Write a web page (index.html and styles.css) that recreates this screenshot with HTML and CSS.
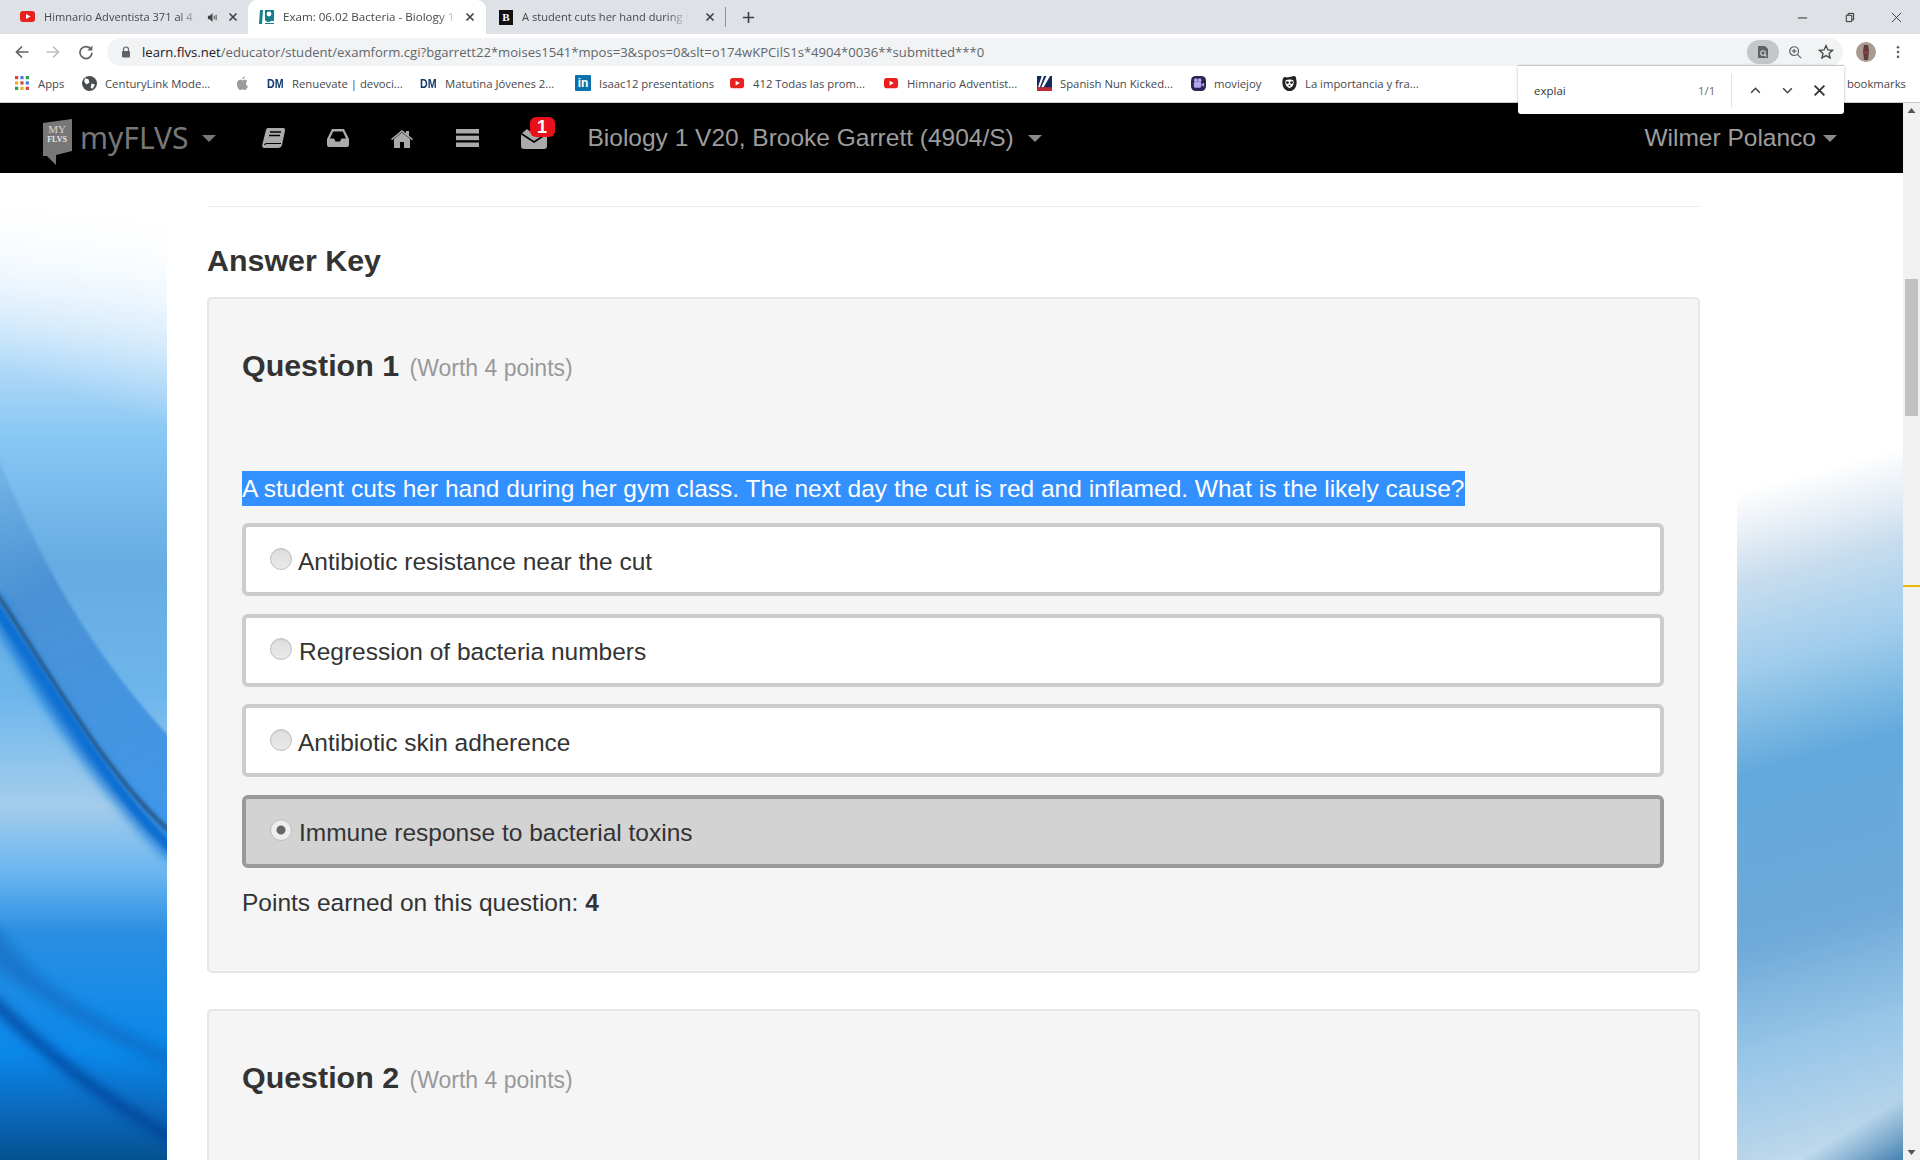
FILE: index.html
```html
<!DOCTYPE html>
<html lang="en">
<head>
<meta charset="utf-8">
<title>Exam: 06.02 Bacteria - Biology 1</title>
<link rel="stylesheet" href="styles.css">
</head>
<body>
<div class="window">
  <div class="tabstrip">
    <div class="tab tab-first">
      <svg class="fav" viewBox="0 0 16 16"><rect x="0" y="2" width="15" height="11" rx="3" fill="#e8201f"/><path d="M6 5l4.5 2.5L6 10z" fill="#fff"/></svg>
      <span class="tab-title tab-title-first">Himnario Adventista 371 al 4</span>
      <svg class="speaker" viewBox="0 0 12 12"><path d="M1 4h2l3-3v10L3 8H1z" fill="#444"/><path d="M8 4v4M10 3v6" stroke="#444" stroke-width="1"/></svg>
      <svg class="tab-x" viewBox="0 0 10 10"><path d="M1.5 1.5l7 7M8.5 1.5l-7 7" stroke="#3c4043" stroke-width="1.6"/></svg>
    </div>
    <div class="tab tab-active">
      <svg class="fav" viewBox="0 0 16 16"><path d="M1 1h3L3 15H0zM6 1h9v11h-3a4 4 0 0 1-6-1z" fill="#14808f"/><circle cx="10" cy="5" r="2.4" fill="#fff"/><path d="M6 14h9v1H6z" fill="#14808f"/></svg>
      <span class="tab-title tab-title-active">Exam: 06.02 Bacteria - Biology 1 V</span>
      <svg class="tab-x" viewBox="0 0 10 10"><path d="M1.5 1.5l7 7M8.5 1.5l-7 7" stroke="#3c4043" stroke-width="1.6"/></svg>
    </div>
    <div class="tab tab-third">
      <span class="fav fav-b">B</span>
      <span class="tab-title tab-title-third">A student cuts her hand during h</span>
      <svg class="tab-x" viewBox="0 0 10 10"><path d="M1.5 1.5l7 7M8.5 1.5l-7 7" stroke="#3c4043" stroke-width="1.6"/></svg>
    </div>
    <span class="tab-sep"></span>
    <svg class="new-tab" viewBox="0 0 14 14"><path d="M7 1v12M1 7h12" stroke="#3c4043" stroke-width="1.7"/></svg>
    <div class="win-controls">
      <svg class="win-btn" viewBox="0 0 12 12"><path d="M1 6.5h10" stroke="#222" stroke-width="1"/></svg>
      <svg class="win-btn" viewBox="0 0 12 12"><path d="M2.5 3.5h6v7h-6zM4.500 3.500v-2h6v7h-2" fill="none" stroke="#222" stroke-width="1"/></svg>
      <svg class="win-btn" viewBox="0 0 12 12"><path d="M1 1l10 10M11 1L1 11" stroke="#222" stroke-width="0.9"/></svg>
    </div>
  </div>

  <div class="toolbar">
    <svg class="tb-icon tb-back" viewBox="0 0 16 16"><path d="M14.5 8H2.500M8 2.500L2.500 8 8 13.500" fill="none" stroke="#5f6368" stroke-width="1.7"/></svg>
    <svg class="tb-icon tb-forward" viewBox="0 0 16 16"><path d="M1.500 8h12M8 2.500L13.500 8 8 13.500" fill="none" stroke="#bdc1c6" stroke-width="1.7"/></svg>
    <svg class="tb-icon tb-reload" viewBox="0 0 16 16"><path d="M13 5.200A6 6 0 1 0 14 8.800" fill="none" stroke="#5f6368" stroke-width="1.7"/><path d="M14.400 1.600v5h-5z" fill="#5f6368"/></svg>
    <div class="omnibox">
      <svg class="lock" viewBox="0 0 10 12"><path d="M2.500 5V3.500a2.500 2.500 0 0 1 5 0V5" fill="none" stroke="#5f6368" stroke-width="1.2"/><rect x="1" y="5" width="8" height="6.500" rx="1" fill="#5f6368"/></svg>
      <span class="url"><span class="url-host">learn.flvs.net</span>/educator/student/examform.cgi?bgarrett22*moises1541*mpos=3&amp;spos=0&amp;slt=o174wKPCilS1s*4904*0036**submitted***0</span>
      <span class="omni-find"><svg viewBox="0 0 12 14"><path d="M1 1h7l3 3v9H1z" fill="#5f6368"/><circle cx="6" cy="8" r="2.300" fill="none" stroke="#d3d5d8" stroke-width="1.1"/><path d="M7.600 9.600L9.500 11.500" stroke="#d3d5d8" stroke-width="1.1"/></svg></span>
      <svg class="omni-icon" viewBox="0 0 16 16"><circle cx="7" cy="7" r="5" fill="none" stroke="#5f6368" stroke-width="1.4"/><path d="M10.700 10.700L15 15M7 4.500v5M4.500 7h5" stroke="#5f6368" stroke-width="1.4"/></svg>
      <svg class="omni-icon omni-star" viewBox="0 0 16 16"><path d="M8 1.600l1.900 4.300 4.700.4-3.600 3.100 1.100 4.600L8 11.600 3.900 14l1.100-4.600-3.600-3.100 4.700-.4z" fill="none" stroke="#444" stroke-width="1.3"/></svg>
    </div>
    <svg class="avatar" viewBox="0 0 20 20"><circle cx="10" cy="10" r="10" fill="#a89a90"/><path d="M8 3h4l1 6-1 9H8l-1-9z" fill="#5c3f3c"/><path d="M8 9h4v3H8z" fill="#8f3b46"/></svg>
    <svg class="menu-dots" viewBox="0 0 4 16"><circle cx="2" cy="2.500" r="1.500" fill="#5f6368"/><circle cx="2" cy="8" r="1.500" fill="#5f6368"/><circle cx="2" cy="13.500" r="1.500" fill="#5f6368"/></svg>
  </div>

  <div class="bookmarks">
    <div class="bm"><svg class="bm-icon" viewBox="0 0 14 14"><g><rect x="0" y="0" width="3" height="3" fill="#d9443a"/><rect x="5" y="0" width="3" height="3" fill="#3f7fe0"/><rect x="10" y="0" width="3" height="3" fill="#2e9c50"/><rect x="0" y="5" width="3" height="3" fill="#e8b31e"/><rect x="5" y="5" width="3" height="3" fill="#d9443a"/><rect x="10" y="5" width="3" height="3" fill="#3f7fe0"/><rect x="0" y="10" width="3" height="3" fill="#2e9c50"/><rect x="5" y="10" width="3" height="3" fill="#e8b31e"/><rect x="10" y="10" width="3" height="3" fill="#d9443a"/></g></svg><span class="bm-text">Apps</span></div>
    <div class="bm"><svg class="bm-icon" viewBox="0 0 14 14"><circle cx="7" cy="7" r="7" fill="#4a4d50"/><path d="M3 2l3 1 1 3-3 2-2-3zM9 7l3 1-2 4-2-1z" fill="#fff"/></svg><span class="bm-text">CenturyLink Mode...</span></div>
    <div class="bm"><svg class="bm-icon" viewBox="0 0 14 16"><path d="M9.500 4c1 0 2 .5 2.700 1.400-2.200 1.400-1.800 4.500.6 5.500-.8 2-2 4-3.200 4-1 0-1.300-.6-2.500-.6s-1.600.6-2.500.6C3 15 1 11.500 1 8.500 1 5.500 3 4 4.700 4c1 0 1.900.7 2.500.7S8.500 4 9.500 4zM9.500.5c.1 1.500-1.200 3-2.700 2.900-.2-1.500 1.300-2.900 2.700-2.900z" fill="#9b9b9b"/></svg></div>
    <div class="bm"><span class="dm">DM</span><span class="bm-text">Renuevate | devoci...</span></div>
    <div class="bm"><span class="dm">DM</span><span class="bm-text">Matutina Jóvenes 2...</span></div>
    <div class="bm"><span class="li">in</span><span class="bm-text">Isaac12 presentations</span></div>
    <div class="bm"><svg class="bm-icon" viewBox="0 0 16 16"><rect x="0" y="2" width="15" height="11" rx="3" fill="#e8201f"/><path d="M6 5l4.500 2.500L6 10z" fill="#fff"/></svg><span class="bm-text">412 Todas las prom...</span></div>
    <div class="bm"><svg class="bm-icon" viewBox="0 0 16 16"><rect x="0" y="2" width="15" height="11" rx="3" fill="#e8201f"/><path d="M6 5l4.500 2.500L6 10z" fill="#fff"/></svg><span class="bm-text">Himnario Adventist...</span></div>
    <div class="bm"><svg class="bm-icon" viewBox="0 0 16 16"><rect width="16" height="16" fill="#132a5c"/><path d="M5 0h2.500L3 12H1zM10 0h4L7 12H4.500z" fill="#fff"/><path d="M0 12h16v4H0z" fill="#c02a35"/></svg><span class="bm-text">Spanish Nun Kicked...</span></div>
    <div class="bm"><svg class="bm-icon" viewBox="0 0 16 16"><rect width="16" height="16" rx="5" fill="#2b2452"/><rect x="3" y="6.500" width="8" height="6" rx="1.500" fill="#b5a4ee"/><circle cx="5.200" cy="4.500" r="2" fill="#b5a4ee"/><circle cx="9.200" cy="4.500" r="2" fill="#b5a4ee"/><path d="M11 9l3-1.800v4.600z" fill="#b5a4ee"/></svg><span class="bm-text">moviejoy</span></div>
    <div class="bm"><svg class="bm-icon" viewBox="0 0 16 16"><path d="M1 3a2.500 2.500 0 0 1 4-1.500L8 1l3-.5A2.500 2.500 0 0 1 15 3c1 3 1 8-2 11l-3 2H6l-3-2C0 11 0 6 1 3z" fill="#222"/><path d="M4 4.500c2-1.200 6-1.200 8 0 .8 2 .5 5-1 6.500l-3 2-3-2c-1.500-1.500-1.800-4.500-1-6.500z" fill="#fff"/><circle cx="5.800" cy="7" r="1.500" fill="#222"/><circle cx="10.200" cy="7" r="1.500" fill="#222"/><circle cx="8" cy="10" r="1" fill="#222"/></svg><span class="bm-text">La importancia y fra...</span></div>
    <span class="bm-text bm-other">bookmarks</span>
  </div>

  <div class="findbar">
    <span class="find-input">explai</span>
    <span class="find-count">1/1</span>
    <span class="find-sep"></span>
    <svg class="find-btn find-btn-first" viewBox="0 0 12 12"><path d="M2 8l4-4 4 4" fill="none" stroke="#444" stroke-width="1.400"/></svg>
    <svg class="find-btn" viewBox="0 0 12 12"><path d="M2 4l4 4 4-4" fill="none" stroke="#444" stroke-width="1.400"/></svg>
    <svg class="find-btn" viewBox="0 0 12 12"><path d="M1.500 1.500l9 9M10.500 1.500l-9 9" stroke="#333" stroke-width="1.700"/></svg>
  </div>

  <div class="viewport">
    <div class="page">
      <nav class="navbar">
        <div class="brand">
          <svg class="logo" viewBox="0 0 29 46"><path d="M0 4L29 0v32L13 36v10L4 37H0z" fill="#777"/><text x="14" y="14" class="logo-my">MY</text><text x="14" y="23" class="logo-flvs">FLVS</text></svg>
          <span class="brand-name">myFLVS</span>
          <span class="caret caret-brand"></span>
        </div>
        <svg class="nav-icon nav-book" viewBox="0 0 24 22"><path d="M6 1h15c1.500 0 2.500 1 2 2.500L20 18c-.5 2-2 3-4 3H3c-2 0-3.200-1.500-2.700-3.500L4 3c.3-1.200 1-2 2-2z" fill="#aaa"/><path d="M8 5h11M7 8.500h11" stroke="#000" stroke-width="1.500"/><path d="M2.500 18c.3-1 1-1.500 2-1.500H19" fill="none" stroke="#000" stroke-width="1.200"/></svg>
        <svg class="nav-icon nav-inbox" viewBox="0 0 22 18"><path d="M5 0h12l5 10v6a2 2 0 0 1-2 2H2a2 2 0 0 1-2-2v-6z" fill="#aaa"/><path d="M6.200 2.500h9.600l3.200 7h-4.500l-1.500 3H8.500l-1.500-3H3z" fill="#000"/></svg>
        <svg class="nav-icon nav-home" viewBox="0 0 22 19"><path d="M11 3.500l8 6.500v9h-6v-6H9v6H3v-9z" fill="#aaa"/><path d="M0 10L11 1l4 3.300V2h3v4.700L22 10l-1 1.200L11 3 1 11.200z" fill="#aaa"/></svg>
        <svg class="nav-icon nav-bars" viewBox="0 0 23 18"><rect width="23" height="4.500" fill="#aaa"/><rect y="6.700" width="23" height="4.500" fill="#aaa"/><rect y="13.500" width="23" height="4.500" fill="#aaa"/></svg>
        <div class="nav-mail">
          <svg class="nav-icon-mail" viewBox="0 0 26 21"><path d="M0 6l6-5 7 6 13-6v17a3 3 0 0 1-3 3H3a3 3 0 0 1-3-3z" fill="#aaa"/><path d="M0 5.500l13 8.500 13-8.500" fill="none" stroke="#000" stroke-width="1.500"/></svg>
          <span class="badge">1</span>
        </div>
        <span class="course">Biology 1 V20, Brooke Garrett (4904/S)</span>
        <span class="caret caret-course"></span>
        <span class="user">Wilmer Polanco</span>
        <span class="caret caret-user"></span>
      </nav>
      <div class="layout">
        <aside class="side">
          <svg class="side-art" viewBox="0 0 167 988" preserveAspectRatio="none">
            <defs>
              <linearGradient id="lg" x1="0" y1="0" x2="0" y2="1">
                <stop offset="0.03" stop-color="#fff"/>
                <stop offset="0.10" stop-color="#e6f3fd"/>
                <stop offset="0.17" stop-color="#bfe0fa"/>
                <stop offset="0.27" stop-color="#86c6f3"/>
                <stop offset="0.40" stop-color="#66ace2"/>
                <stop offset="0.53" stop-color="#6db6ec"/>
                <stop offset="0.64" stop-color="#a4cdec"/>
                <stop offset="0.71" stop-color="#69b5f0"/>
                <stop offset="0.77" stop-color="#2a8ee2"/>
                <stop offset="0.89" stop-color="#0a88ea"/>
                <stop offset="0.95" stop-color="#0b68bc"/>
                <stop offset="1" stop-color="#04508f"/>
              </linearGradient>
              <linearGradient id="lw" gradientUnits="userSpaceOnUse" x1="167" y1="40" x2="100" y2="230">
                <stop offset="0" stop-color="#fff"/>
                <stop offset="1" stop-color="#fff" stop-opacity="0"/>
              </linearGradient>
              <linearGradient id="lb" gradientUnits="userSpaceOnUse" x1="0" y1="277" x2="167" y2="660">
                <stop offset="0" stop-color="#5d9fd8" stop-opacity=".25"/>
                <stop offset=".35" stop-color="#3f88d0" stop-opacity=".75"/>
                <stop offset="1" stop-color="#3a94ea" stop-opacity=".95"/>
              </linearGradient>
              <filter id="b2"><feGaussianBlur stdDeviation="1.800"/></filter>
              <filter id="b6"><feGaussianBlur stdDeviation="6"/></filter>
            </defs>
            <rect width="167" height="988" fill="url(#lg)"/>
            <rect width="167" height="300" fill="url(#lw)"/>
            <path d="M-10 265C40 390 90 480 177 572V672C110 610 40 500 -10 405z" fill="url(#lb)" filter="url(#b2)"/>
            <path d="M-10 425C40 510 100 610 177 682" fill="none" stroke="#0a6fd4" stroke-width="16" filter="url(#b6)"/>
            <path d="M-10 410C50 500 110 610 177 664" fill="none" stroke="#2a5a88" stroke-width="4" filter="url(#b2)"/>
            <path d="M-10 426C50 510 110 620 177 680" fill="none" stroke="#0c70d2" stroke-width="8" filter="url(#b2)"/>
            <path d="M-10 745C30 800 60 830 177 880V900C90 860 30 820 -10 790z" fill="#0a5cb0" opacity=".45" filter="url(#b6)"/>
            <path d="M-10 825C50 885 110 930 177 968" fill="none" stroke="#033f96" stroke-width="9" filter="url(#b6)"/>
          </svg>
        </aside>
        <main class="content">
          <hr class="rule">
          <h2 class="section-title">Answer Key</h2>
          <section class="card">
            <h3 class="q-title">Question 1 <small class="q-worth">(Worth 4 points)</small></h3>
            <p class="q-text"><span class="selected">A student cuts her hand during her gym class. The next day the cut is red and inflamed. What is the likely cause?</span></p>
            <div class="options">
              <div class="option"><span class="radio"></span><span class="opt-text">Antibiotic resistance near the cut</span></div>
              <div class="option"><span class="radio"></span><span class="opt-text opt-shift">Regression of bacteria numbers</span></div>
              <div class="option"><span class="radio"></span><span class="opt-text">Antibiotic skin adherence</span></div>
              <div class="option option-selected"><span class="radio radio-on"></span><span class="opt-text opt-shift">Immune response to bacterial toxins</span></div>
            </div>
            <p class="points">Points earned on this question: <strong>4</strong></p>
          </section>
          <section class="card">
            <h3 class="q-title">Question 2 <small class="q-worth">(Worth 4 points)</small></h3>
          </section>
        </main>
        <aside class="side side-right">
          <svg class="side-art" viewBox="0 0 166 988" preserveAspectRatio="none">
            <defs>
              <linearGradient id="rg" gradientUnits="userSpaceOnUse" x1="0" y1="0" x2="268" y2="988">
                <stop offset="0.30" stop-color="#fff"/>
                <stop offset="0.345" stop-color="#e6eef5"/>
                <stop offset="0.39" stop-color="#c6dcee"/>
                <stop offset="0.47" stop-color="#a0cdec"/>
                <stop offset="0.57" stop-color="#62a9dc"/>
                <stop offset="0.73" stop-color="#6fa9d8"/>
                <stop offset="0.84" stop-color="#98c7e8"/>
                <stop offset="0.93" stop-color="#b9d5ea"/>
                <stop offset="0.98" stop-color="#cfe4f4"/>
                <stop offset="1" stop-color="#bcdcf2"/>
              </linearGradient>
              <linearGradient id="rc" x1="0" y1="0" x2="1" y2="1">
                <stop offset="0.5" stop-color="#3f7fae" stop-opacity="0"/>
                <stop offset="1" stop-color="#3f7fae"/>
              </linearGradient>
            </defs>
            <rect width="166" height="988" fill="url(#rg)"/>
            <path d="M60 988L166 925V988z" fill="url(#rc)"/>
          </svg>
        </aside>
      </div>
    </div>
    <div class="scrollbar">
      <svg class="sb-arrow" viewBox="0 0 8 5"><path d="M0 5l4-5 4 5z" fill="#555"/></svg>
      <div class="sb-thumb"></div>
      <div class="sb-tick"></div>
      <svg class="sb-arrow sb-arrow-down" viewBox="0 0 8 5"><path d="M0 0l4 5 4-5z" fill="#555"/></svg>
    </div>
  </div>
</div>
</body>
</html>
```

FILE: styles.css
```css
* { box-sizing: border-box; }
html, body { margin: 0; height: 100%; overflow: hidden; }
body { font-family: "Liberation Sans", Arial, sans-serif; color: #333; background: #fff; }
.window { position: relative; display: flex; flex-direction: column; height: 1160px; }

/* Tab strip */
.tabstrip { display: flex; align-items: center; height: 34px; background: #dee1e6; font-family: "Open Sans", sans-serif; font-size: 11.500px; color: #45484c; flex: none; }
.tab { display: flex; align-items: center; height: 34px; flex: none; }
.tab-first { width: 248px; padding-left: 20px; }
.tab-active { width: 238px; padding-left: 11px; background: #fff; border-radius: 9px 9px 0 0; }
.tab-third { width: 239px; padding-left: 13px; }
.fav { width: 16px; height: 16px; flex: none; margin-right: 8px; }
.fav-b { width: 14px; height: 15px; background: #111; color: #fff; font: bold 11px "Liberation Serif", serif; text-align: center; line-height: 15px; margin-right: 9px; }
.tab-title { white-space: nowrap; padding-bottom: 2px; flex: none; -webkit-mask-image: linear-gradient(to right, #000 88%, transparent); mask-image: linear-gradient(to right, #000 88%, transparent); }
.tab-title-first { width: 155px; font-size: 11.100px; }
.tab-title-active { width: 176px; font-size: 11.600px; }
.tab-title-third { width: 166px; font-size: 11.100px; }
.speaker { width: 11px; height: 11px; margin-left: 8px; flex: none; }
.tab-x { width: 10px; height: 10px; flex: none; margin-left: 10px; }
.tab-active .tab-x { margin-left: 6px; }
.tab-third .tab-x { margin-left: 17px; }
.tab-sep { width: 1px; height: 20px; background: #8c8f94; flex: none; }
.new-tab { width: 13px; height: 13px; margin-left: 16px; flex: none; }
.win-controls { display: flex; margin-left: auto; padding-right: 18px; gap: 36px; }
.win-btn { width: 11px; height: 11px; }

/* Toolbar */
.toolbar { display: flex; align-items: center; height: 32px; flex: none; background: #fff; padding-top: 4px; }
.tb-icon { width: 16px; height: 16px; flex: none; }
.tb-back { margin-left: 14px; }
.tb-forward { margin-left: 15px; }
.tb-reload { margin-left: 17px; }
.omnibox { display: flex; align-items: center; margin-left: 13px; width: 1736px; height: 28px; border-radius: 14px; background: #f1f3f4; padding-left: 14px; flex: none; }
.lock { width: 10px; height: 12px; flex: none; }
.url { margin-left: 11px; font-family: "Open Sans", sans-serif; font-size: 13.100px; color: #62666b; white-space: nowrap; flex: 1; min-width: 0; }
.url-host { color: #202124; }
.omni-find { display: flex; align-items: center; justify-content: center; width: 32px; height: 24px; border-radius: 12px; background: #c4c6c9; flex: none; }
.omni-find svg { width: 12px; height: 14px; }
.omni-icon { width: 14px; height: 14px; margin-left: 9px; flex: none; }
.omni-star { width: 16px; height: 16px; margin: 0 9px 0 16px; }
.avatar { width: 20px; height: 20px; margin-left: 13px; flex: none; }
.menu-dots { width: 4px; height: 14px; margin-left: 20px; flex: none; }

/* Bookmarks */
.bookmarks { display: grid; grid-template-columns: 67px 153px 32px 153px 155px 155px 154px 153px 154px 91px 160px 1fr; align-items: center; height: 37px; padding: 0 0 2px 15px; flex: none; background: #fff; border-bottom: 1px solid #c8c8c8; font-family: "Open Sans", sans-serif; font-size: 11.300px; color: #45484c; }
.bm { display: flex; align-items: center; white-space: nowrap; }
.bm-icon { width: 15px; height: 15px; flex: none; margin-right: 8px; }
.bm-text { white-space: nowrap; }
.dm { font: bold 13px "Liberation Sans", sans-serif; color: #12386b; width: 16px; margin-right: 9px; transform: scaleX(.82); transform-origin: left; }
.li { display: block; width: 16px; height: 16px; margin-right: 8px; background: #0a71ac; color: #fff; font: bold 12px/16px "Liberation Sans", sans-serif; text-align: center; border-radius: 1px; }
.bm-other { justify-self: end; padding-right: 14px; }

/* Find bar */
.findbar { position: absolute; left: 1518px; top: 65px; width: 326px; height: 49px; display: flex; align-items: center; background: #fff; border-radius: 0 0 3px 3px; border-top: 1px solid #c8c8c8; box-shadow: 0 1px 3px rgba(0,0,0,.3); font-family: "Open Sans", sans-serif; font-size: 11.500px; color: #333; z-index: 5; }
.find-input { margin-left: 16px; width: 164px; }
.find-count { width: 16px; color: #6a6f68; }
.find-sep { width: 1px; height: 33px; background: #e2e2e2; margin-left: 17px; }
.find-btn { width: 13px; height: 13px; margin-left: 19px; flex: none; }
.find-btn-first { margin-left: 17px; }

/* Viewport */
.viewport { display: flex; flex: 1; min-height: 0; }
.page { flex: 1; min-width: 0; }
.navbar { display: flex; align-items: center; height: 70px; background: #000; color: #9d9d9d; }
.brand { display: flex; align-items: center; margin-left: 43px; }
.logo { width: 29px; height: 46px; flex: none; margin-top: 8px; }
.logo-my { font: 11px "Liberation Serif", serif; fill: #d8d8d8; text-anchor: middle; }
.logo-flvs { font: bold 8px "Liberation Serif", serif; fill: #e8e8e8; text-anchor: middle; }
.brand-name { margin-left: 8px; font: 30px "Noto Sans", sans-serif; color: #777; line-height: 40px; }
.caret { display: block; width: 0; height: 0; border-left: 7px solid transparent; border-right: 7px solid transparent; border-top: 7px solid #777; flex: none; }
.caret-brand { margin-left: 13px; }
.nav-icon { flex: none; fill: #aaa; }
.nav-book { width: 24px; height: 22px; margin-left: 46px; }
.nav-inbox { width: 22px; height: 18px; margin-left: 41px; }
.nav-home { width: 22px; height: 19px; margin-left: 42px; }
.nav-bars { width: 23px; height: 18px; margin-left: 43px; }
.nav-mail { position: relative; width: 26px; height: 21px; margin-left: 42px; flex: none; }
.nav-icon-mail { display: block; width: 26px; height: 21px; }
.badge { position: absolute; left: 9px; top: -11px; width: 25px; height: 20px; border-radius: 6px; background: #e8101a; color: #fff; font: bold 18px/20px "Liberation Sans", sans-serif; text-align: center; }
.course { margin-left: 41px; font-size: 24.500px; white-space: nowrap; }
.caret-course { margin-left: 14px; border-top-color: #8a8a8a; }
.user { margin-left: auto; font-size: 24.500px; white-space: nowrap; }
.caret-user { margin: 0 66px 0 7px; border-top-color: #8a8a8a; }

/* Layout */
.layout { display: grid; grid-template-columns: 167px 1fr 166px; height: 987px; }
.side { background: #fff; min-width: 0; }
.side-art { display: block; width: 100%; height: 100%; }
.content { padding: 33px 37px 0 40px; min-width: 0; overflow: hidden; }
.rule { margin: 0; border: 0; border-top: 1px solid #eee; }
.section-title { margin: 35px 0 19px; font-size: 30.400px; line-height: 36px; font-weight: bold; color: #333; }
.card { border: 2px solid #e6e6e6; border-radius: 5px; background: #f5f5f5; padding: 46px 34px 0 33px; margin-bottom: 36px; height: 676px; }
.q-title { margin: 0; font-size: 30.400px; line-height: 40px; font-weight: bold; color: #333; }
.q-worth { font-size: 23px; font-weight: normal; color: #999; margin-left: 2px; }
.q-text { margin: 83px 0 0; font-size: 24.500px; line-height: 35px; }
.selected { display: inline-block; background: #3390ff; color: #fff; }
.options { display: flex; flex-direction: column; gap: 17.500px; margin-top: 17px; }
.option { display: flex; align-items: center; height: 73px; padding: 0 0 0 24px; background: #fff; border: 4px solid #ccc; border-radius: 6px; }
.option-selected { background: #d3d3d3; border-color: #999; }
.radio { display: block; width: 22px; height: 22px; margin: -2px 0 0; border-radius: 50%; border: 1px solid #c0c0c0; background: linear-gradient(#dfdfdf, #e9e9e9); flex: none; box-shadow: inset 0 1px 1px rgba(0,0,0,.08); }
.radio-on { background: radial-gradient(circle, #666 0 4px, #eee 5px); }
.opt-text { margin-left: 6px; padding-top: 4px; font-size: 24.500px; line-height: 36px; }
.opt-shift { margin-left: 7px; }
.points { margin: 17.500px 0 0; font-size: 24.500px; line-height: 36px; }

/* Scrollbar */
.scrollbar { position: relative; width: 17px; flex: none; background: #f1f1f1; }
.sb-arrow { display: block; position: absolute; left: 4px; top: 5px; width: 9px; height: 5px; }
.sb-arrow-down { top: auto; bottom: 5px; }
.sb-thumb { position: absolute; left: 2px; top: 176px; width: 13px; height: 137px; background: #c1c1c1; }
.sb-tick { position: absolute; left: 0; top: 482px; width: 17px; height: 2px; background: #e8b800; }
```
